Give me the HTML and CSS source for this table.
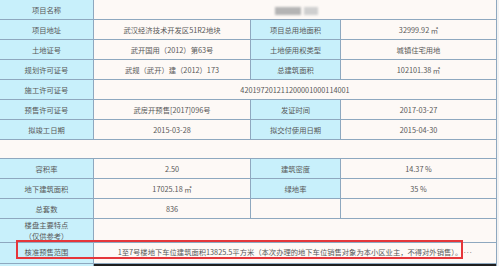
FILE: index.html
```html
<!DOCTYPE html>
<html lang="zh-CN">
<head>
    <meta charset="UTF-8">
    <title>项目信息</title>
    <link rel="stylesheet" href="styles.css">
</head>
<body>

<div class="wrap">
    <table class="info">
        <colgroup>
            <col class="c1">
            <col class="c2">
            <col class="c3">
            <col class="c4">
        </colgroup>
        <tr>
            <th>项目名称</th>
            <td colspan="3" class="blurred"><span class="mask a"></span><span class="mask b"></span></td>
        </tr>
        <tr>
            <th>项目地址</th>
            <td>武汉经济技术开发区51R2地块</td>
            <th>项目总用地面积</th>
            <td>32999.92 ㎡</td>
        </tr>
        <tr>
            <th>土地证号</th>
            <td>武开国用（2012）第63号</td>
            <th>土地使用权类型</th>
            <td>城镇住宅用地</td>
        </tr>
        <tr>
            <th>规划许可证号</th>
            <td>武规（武开）建（2012）173</td>
            <th>总建筑面积</th>
            <td>102101.38 ㎡</td>
        </tr>
        <tr>
            <th>施工许可证号</th>
            <td colspan="3">420197201211200001000114001</td>
        </tr>
        <tr>
            <th>预售许可证号</th>
            <td>武房开预售[2017]096号</td>
            <th>发证时间</th>
            <td>2017-03-27</td>
        </tr>
        <tr>
            <th>拟竣工日期</th>
            <td>2015-03-28</td>
            <th>拟交付使用日期</th>
            <td>2015-04-30</td>
        </tr>
        <tr class="blank">
            <td colspan="4"></td>
        </tr>
        <tr>
            <th>容积率</th>
            <td>2.50</td>
            <th>建筑密度</th>
            <td>14.37 %</td>
        </tr>
        <tr>
            <th>地下建筑面积</th>
            <td>17025.18 ㎡</td>
            <th>绿地率</th>
            <td>35 %</td>
        </tr>
        <tr>
            <th>总套数</th>
            <td>836</td>
            <td></td>
            <td></td>
        </tr>
        <tr class="tall">
            <th><div class="clip">楼盘主要特点<br>（仅供参考）</div></th>
            <td colspan="3"></td>
        </tr>
        <tr class="scope">
            <th><div class="clip">核准预售范围</div></th>
            <td colspan="3"><div class="clip">1至7号楼地下车位建筑面积13825.5平方米（本次办理的地下车位销售对象为本小区业主，不得对外销售）。<span class="more">···</span></div></td>
        </tr>
        <tr class="last">
            <th></th>
            <td colspan="3"><div class="box"></div></td>
        </tr>
    </table>
    <div class="highlight"></div>
</div>

</body>
</html>
```

FILE: styles.css
```css
body {
    margin: 0;
    background-color: #f2f2f2;
    font-family: "Noto Sans CJK SC", "Liberation Sans", sans-serif;
    overflow: hidden;
}
.wrap {
    position: relative;
}
.info {
    border-collapse: collapse;
    table-layout: fixed;
    width: 497px;
    margin: -1px 0 0 -1px;
}
.c1 { width: 94px; }
.c2 { width: 157px; }
.c3 { width: 90px; }
.c4 { width: 156px; }
.info th, .info td {
    border: 1px solid #8ea8bf;
    height: 19px;
    padding: 0;
    font-size: 7.3px;
    font-weight: normal;
    color: #585858;
    text-align: center;
    line-height: 10px;
    white-space: nowrap;
    overflow: hidden;
}
.info th {
    background: #c8f0fb;
}
.info td {
    background: #fdf9f6;
}
.info .blank td {
    height: 18px;
}
.clip {
    overflow: hidden;
}
.tall .clip {
    height: 23px;
    line-height: 11px;
    padding-top: 1px;
    box-sizing: border-box;
}
.info .tall td {
    height: 23px;
}
.scope .clip {
    height: 20px;
    line-height: 19px;
}
.info .scope td {
    height: 20px;
}
.more {
    margin-left: 5px;
    font-family: "Liberation Sans", sans-serif;
    letter-spacing: 0.5px;
}
.info .last th, .info .last td {
    height: 10px;
    vertical-align: top;
}
.info .last td {
    background: #fff;
}
.box {
    height: 10px;
    border-top: 2px solid #1e1e1e;
    border-right: 2px solid #1e1e1e;
}
.blurred {
    text-align: left !important;
}
.mask {
    display: inline-block;
    height: 8px;
    vertical-align: middle;
    filter: blur(1.2px);
}
.mask.a {
    width: 26px;
    margin-left: 181px;
    background: #b4b4b4;
}
.mask.b {
    width: 14px;
    margin-left: 3px;
    background: #cfcfcf;
}
.highlight {
    position: absolute;
    left: 16px;
    top: 241px;
    width: 443px;
    height: 15px;
    border: 2px solid #e5363a;
}
```
